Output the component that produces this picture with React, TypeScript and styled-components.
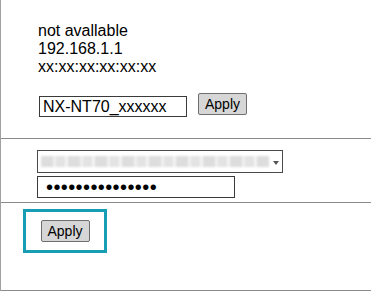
import React from 'react';
import styled, {createGlobalStyle} from 'styled-components';

const GlobalStyle = createGlobalStyle`
	html, body {
		margin: 0;
		padding: 0;
		background: #ffffff;
	}
	body {
		font-family: 'Liberation Sans', Arial, sans-serif;
		color: #000000;
	}
`;

const Page = styled.div`
	width: 371px;
	height: 291px;
	box-sizing: border-box;
	border-left: 1px solid #a0a0a0;
	display: flex;
	flex-direction: column;
`;

const Section = styled.div<{$height: number; $padding: string}>`
	height: ${(p) => p.$height}px;
	box-sizing: border-box;
	padding: ${(p) => p.$padding};
	border-bottom: 1px solid #8a8a8a;
	display: flex;
	flex-direction: column;
`;

const InfoText = styled.div`
	font-size: 16px;
	line-height: 18px;
	padding-left: 37px;
`;

const Row = styled.div`
	display: flex;
	align-items: flex-start;
	gap: 11px;
	margin-top: 17px;
	padding-left: 38px;
`;

const TextInput = styled.input<{$offset?: number}>`
	width: 148px;
	height: 21px;
	box-sizing: border-box;
	border: 1px solid #3a3a3a;
	padding: 0 3px;
	margin: 0;
	margin-top: ${(p) => p.$offset ?? 0}px;
	font-family: 'Liberation Sans', Arial, sans-serif;
	font-size: 16px;
	color: #000;
	background: #fff;
	outline: none;
`;

const Button = styled.button`
	width: 49px;
	height: 22px;
	box-sizing: border-box;
	margin: 0;
	padding: 0;
	border: 1px solid #6e6e6e;
	border-radius: 2px;
	background: #d6d6d6;
	font-family: 'Liberation Sans', Arial, sans-serif;
	font-size: 14px;
	color: #000;
`;

const Fields = styled.div`
	display: flex;
	flex-direction: column;
	gap: 3px;
	padding-left: 36px;
`;

const FakeSelect = styled.div`
	width: 246px;
	height: 23px;
	box-sizing: border-box;
	border: 1px solid #4a4a4a;
	display: flex;
	align-items: center;
	padding: 0 3px 0 3px;
	gap: 4px;
`;

const Blurred = styled.div`
	flex: 1;
	height: 11px;
	background: repeating-linear-gradient(
		90deg,
		#dddddd 0 12px,
		#f0f0f0 12px 15px,
		#e3e3e3 15px 24px,
		#f4f4f4 24px 27px
	);
	filter: blur(0.8px);
`;

const Arrow = styled.div`
	width: 0;
	height: 0;
	border-left: 3px solid transparent;
	border-right: 3px solid transparent;
	border-top: 4px solid #555;
	margin-top: 2px;
`;

const PasswordInput = styled(TextInput)`
	width: 198px;
	height: 22px;
	padding: 0 8px;
	font-size: 20px;
	letter-spacing: 0.4px;
`;

const Highlight = styled.div`
	width: 84px;
	height: 44px;
	box-sizing: border-box;
	border: 3px solid #179db4;
	display: flex;
	align-items: center;
	justify-content: center;
	margin-left: 22px;
	margin-top: 6px;
`;

const App = () => {
	return (
		<>
			<GlobalStyle />
			<Page>
				<Section $height={139} $padding={'22px 0 0 0'}>
					<InfoText>not avallable</InfoText>
					<InfoText>192.168.1.1</InfoText>
					<InfoText>xx:xx:xx:xx:xx:xx</InfoText>
					<Row>
						<TextInput defaultValue={'NX-NT70_xxxxxx'} $offset={3} />
						<Button>Apply</Button>
					</Row>
				</Section>
				<Section $height={64} $padding={'11px 0 0 0'}>
					<Fields>
						<FakeSelect>
							<Blurred />
							<Arrow />
						</FakeSelect>
						<PasswordInput type={'password'} defaultValue={'xxxxxxxxxxxxxxx'} />
					</Fields>
				</Section>
				<Section $height={88} $padding={'0'}>
					<Highlight>
						<Button>Apply</Button>
					</Highlight>
				</Section>
			</Page>
		</>
	);
};

export default App;
